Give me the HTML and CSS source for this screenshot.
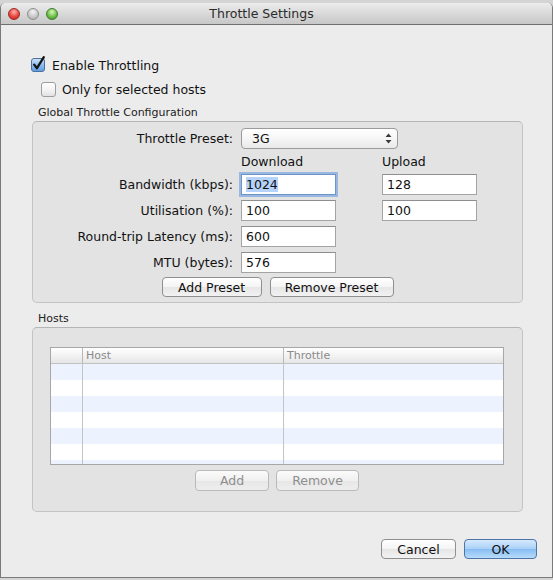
FILE: index.html
```html
<!DOCTYPE html>
<html lang="en">
<head>
    <meta charset="UTF-8">
    <title>Throttle Settings</title>
    <link rel="stylesheet" href="styles.css">
</head>
<body>
    <div class="window">
        <div class="titlebar">
            <div class="lights">
                <span class="light red"></span>
                <span class="light gray"></span>
                <span class="light green"></span>
            </div>
            <div class="title">Throttle Settings</div>
        </div>

        <div class="content">
            <label class="check">
                <svg class="box" width="15" height="16" viewBox="0 0 15 16">
                    <defs>
                        <linearGradient id="blueBox" x1="0" y1="0" x2="0" y2="1">
                            <stop offset="0" stop-color="#cfe4fb"/>
                            <stop offset="0.5" stop-color="#8dbdf0"/>
                            <stop offset="1" stop-color="#5d9de6"/>
                        </linearGradient>
                    </defs>
                    <rect x="0.5" y="2.5" width="13" height="13" rx="2.5" fill="url(#blueBox)" stroke="#4d6f9c"/>
                    <path d="M3.2 8.6 L6 12.2 L12.8 1.2" fill="none" stroke="#161616" stroke-width="2.3" stroke-linecap="round" stroke-linejoin="round"/>
                </svg>
                Enable Throttling
            </label>
            <label class="check sub">
                <span class="box empty"></span>
                Only for selected hosts
            </label>

            <div class="group-title">Global Throttle Configuration</div>
            <div class="group config">
                <div class="form-grid">
                    <span class="lbl">Throttle Preset:</span>
                    <div class="select">
                        <span>3G</span>
                        <svg class="arrows" width="7" height="11" viewBox="0 0 7 11">
                            <path d="M3.5 0.5 L6.5 4 L0.5 4 Z M3.5 10.5 L6.5 7 L0.5 7 Z" fill="#3a3a3a"/>
                        </svg>
                    </div>

                    <span></span>
                    <span class="col-head">Download</span>
                    <span class="col-head up">Upload</span>

                    <span class="lbl">Bandwidth (kbps):</span>
                    <div class="field focused"><span class="sel">1024</span></div>
                    <div class="field up">128</div>

                    <span class="lbl">Utilisation (%):</span>
                    <div class="field">100</div>
                    <div class="field up">100</div>

                    <span class="lbl">Round-trip Latency (ms):</span>
                    <div class="field">600</div>
                    <span></span>

                    <span class="lbl">MTU (bytes):</span>
                    <div class="field">576</div>
                    <span></span>
                </div>
                <div class="button-row">
                    <button class="btn preset-add">Add Preset</button>
                    <button class="btn preset-remove">Remove Preset</button>
                </div>
            </div>

            <div class="group-title hosts-title">Hosts</div>
            <div class="group hosts">
                <div class="table-wrap">
                    <table class="host-table">
                        <thead>
                            <tr><th class="c0"></th><th class="c1">Host</th><th>Throttle</th></tr>
                        </thead>
                        <tbody>
                            <tr><td></td><td></td><td></td></tr>
                            <tr><td></td><td></td><td></td></tr>
                            <tr><td></td><td></td><td></td></tr>
                            <tr><td></td><td></td><td></td></tr>
                            <tr><td></td><td></td><td></td></tr>
                            <tr><td></td><td></td><td></td></tr>
                            <tr><td></td><td></td><td></td></tr>
                        </tbody>
                    </table>
                </div>
                <div class="button-row">
                    <button class="btn small disabled host-add">Add</button>
                    <button class="btn small disabled host-remove">Remove</button>
                </div>
            </div>
        </div>

        <div class="footer">
            <button class="btn cancel">Cancel</button>
            <button class="btn default ok">OK</button>
        </div>
    </div>
</body>
</html>
```

FILE: styles.css
```css
body {
    margin: 0;
    background: #d4d4d4;
    font-family: 'Lucida Grande', 'DejaVu Sans', sans-serif;
    font-size: 12px;
    color: #111;
}

.window {
    box-sizing: border-box;
    width: 553px;
    height: 575px;
    margin-top: 3px;
    background: #ececec;
    border: 1px solid #7a7a7a;
    border-top: none;
    border-radius: 5px 5px 0 0;
    display: flex;
    flex-direction: column;
}

/* title bar */
.titlebar {
    height: 22px;
    box-sizing: border-box;
    border-bottom: 1px solid #6f6f6f;
    border-radius: 5px 5px 0 0;
    background: linear-gradient(#ececec, #d9d9d9 50%, #c7c7c7);
    display: flex;
    align-items: center;
    position: relative;
}

.lights {
    display: flex;
    gap: 7px;
    padding-left: 7px;
}

.light {
    width: 12px;
    height: 12px;
    border-radius: 50%;
    box-sizing: border-box;
}

.light.red {
    background: radial-gradient(circle at 50% 30%, #ffb3ad 0, #e8463d 55%, #b8221b 100%);
    border: 1px solid #9c2a24;
}

.light.gray {
    background: radial-gradient(circle at 50% 30%, #f4f4f4 0, #c9c9c9 55%, #a5a5a5 100%);
    border: 1px solid #8e8e8e;
}

.light.green {
    background: radial-gradient(circle at 50% 30%, #d5f7b8 0, #6fc14b 55%, #3d8d25 100%);
    border: 1px solid #3f7c2a;
}

.title {
    position: absolute;
    left: 0;
    right: 30px;
    text-align: center;
    font-size: 12.5px;
    color: #2b2b2b;
    pointer-events: none;
}

/* body */
.content {
    padding: 31px 29px 0 30px;
}

.check {
    display: flex;
    align-items: center;
    height: 18px;
    font-size: 12.5px;
}

.check .box {
    margin-right: 6px;
    flex: none;
    position: relative;
    top: -1px;
}

.check.sub {
    margin-top: 6px;
    padding-left: 10px;
}

.box.empty {
    width: 13px;
    height: 13px;
    border: 1px solid #9d9d9d;
    border-radius: 3px;
    background: linear-gradient(#ffffff, #f1f1f1 60%, #e2e2e2);
    top: 0;
}

.group-title {
    margin-top: 8px;
    padding-left: 7px;
    font-size: 11px;
    line-height: 14px;
    color: #222;
}

.group-title.hosts-title {
    margin-top: 9px;
}

.group {
    margin-top: 1px;
    margin-left: 1px;
    background: #e3e3e3;
    border: 1px solid #c3c3c3;
    border-top-color: #b5b5b5;
    border-radius: 5px;
}

.config {
    height: 182px;
    box-sizing: border-box;
    padding-top: 6px;
}

.form-grid {
    display: grid;
    grid-template-columns: 200px 95px 133px;
    column-gap: 8px;
    row-gap: 5px;
    grid-template-rows: 21px 15px repeat(4, 21px);
    align-items: center;
}

.form-grid .up {
    margin-left: 38px;
}

.lbl {
    text-align: right;
    font-size: 12.5px;
}

.col-head {
    font-size: 12.5px;
    line-height: 15px;
}

.select {
    grid-column: 2 / span 2;
    width: 157px;
    height: 21px;
    box-sizing: border-box;
    border: 1px solid #9b9b9b;
    border-radius: 4px;
    background: linear-gradient(#ffffff, #f6f6f6 50%, #e9e9e9);
    display: flex;
    align-items: center;
    justify-content: space-between;
    padding: 0 5px 0 10px;
    font-size: 12.5px;
}

.field {
    height: 21px;
    box-sizing: border-box;
    background: #fff;
    border: 1px solid #a4a4a4;
    border-top-color: #8e8e8e;
    padding: 0 4px;
    font-size: 12.5px;
    line-height: 19px;
}

.field.focused {
    border-color: #6f94c6;
    box-shadow: 0 0 0 2px #98b8e2;
}

.sel {
    background: #b5d3fb;
}

.button-row {
    display: flex;
    justify-content: center;
    gap: 8px;
    margin-top: 4px;
}

.btn {
    font-family: inherit;
    font-size: 12.5px;
    color: #111;
    height: 20px;
    padding: 0;
    border: 1px solid #8f8f8f;
    border-radius: 4px;
    background: linear-gradient(#ffffff, #f4f4f4 50%, #e6e6e6 51%, #f2f2f2);
}

.preset-add { width: 100px; }
.preset-remove { width: 124px; }

/* hosts table */
.hosts {
    height: 185px;
    box-sizing: border-box;
    padding: 19px 18px 0 17px;
}

.table-wrap {
    height: 118px;
    box-sizing: border-box;
    border: 1px solid #a7a7a7;
    overflow: hidden;
    background: #fff;
}

.host-table {
    width: 100%;
    border-collapse: collapse;
    table-layout: fixed;
}

.host-table th {
    height: 15px;
    padding: 0 0 0 3px;
    text-align: left;
    font-weight: normal;
    font-size: 11px;
    color: #8a8a8a;
    background: linear-gradient(#ffffff, #f3f3f3 50%, #e5e5e5);
    border-bottom: 1px solid #c2c2c2;
    border-left: 1px solid #b8b8b8;
    line-height: 14px;
}

.host-table th.c0 {
    width: 28px;
    border-left: none;
}

.host-table th.c1 {
    width: 197px;
}

.host-table td {
    height: 16px;
    padding: 0;
    border-left: 1px solid #c4c4c4;
}

.host-table td:first-child {
    border-left: none;
}

.host-table tbody tr:nth-child(odd) {
    background: #edf3fe;
}

.hosts .button-row {
    gap: 7px;
    margin-top: 5px;
}

.btn.small {
    height: 21px;
}

.btn.disabled {
    color: #8e8e8e;
    border-color: #b9b9b9;
    background: linear-gradient(#fbfbfb, #f0f0f0 50%, #e6e6e6 51%, #eeeeee);
}

.host-add { width: 74px; }
.host-remove { width: 83px; }

/* footer */
.footer {
    display: flex;
    justify-content: flex-end;
    gap: 8px;
    padding: 27px 15px 0 0;
}

.cancel { width: 75px; }

.btn.default {
    width: 73px;
    border-color: #4f74a6;
    background: linear-gradient(#d5e9fd, #a9d0f7 50%, #86bdf3 51%, #b8dbfb);
}
```
